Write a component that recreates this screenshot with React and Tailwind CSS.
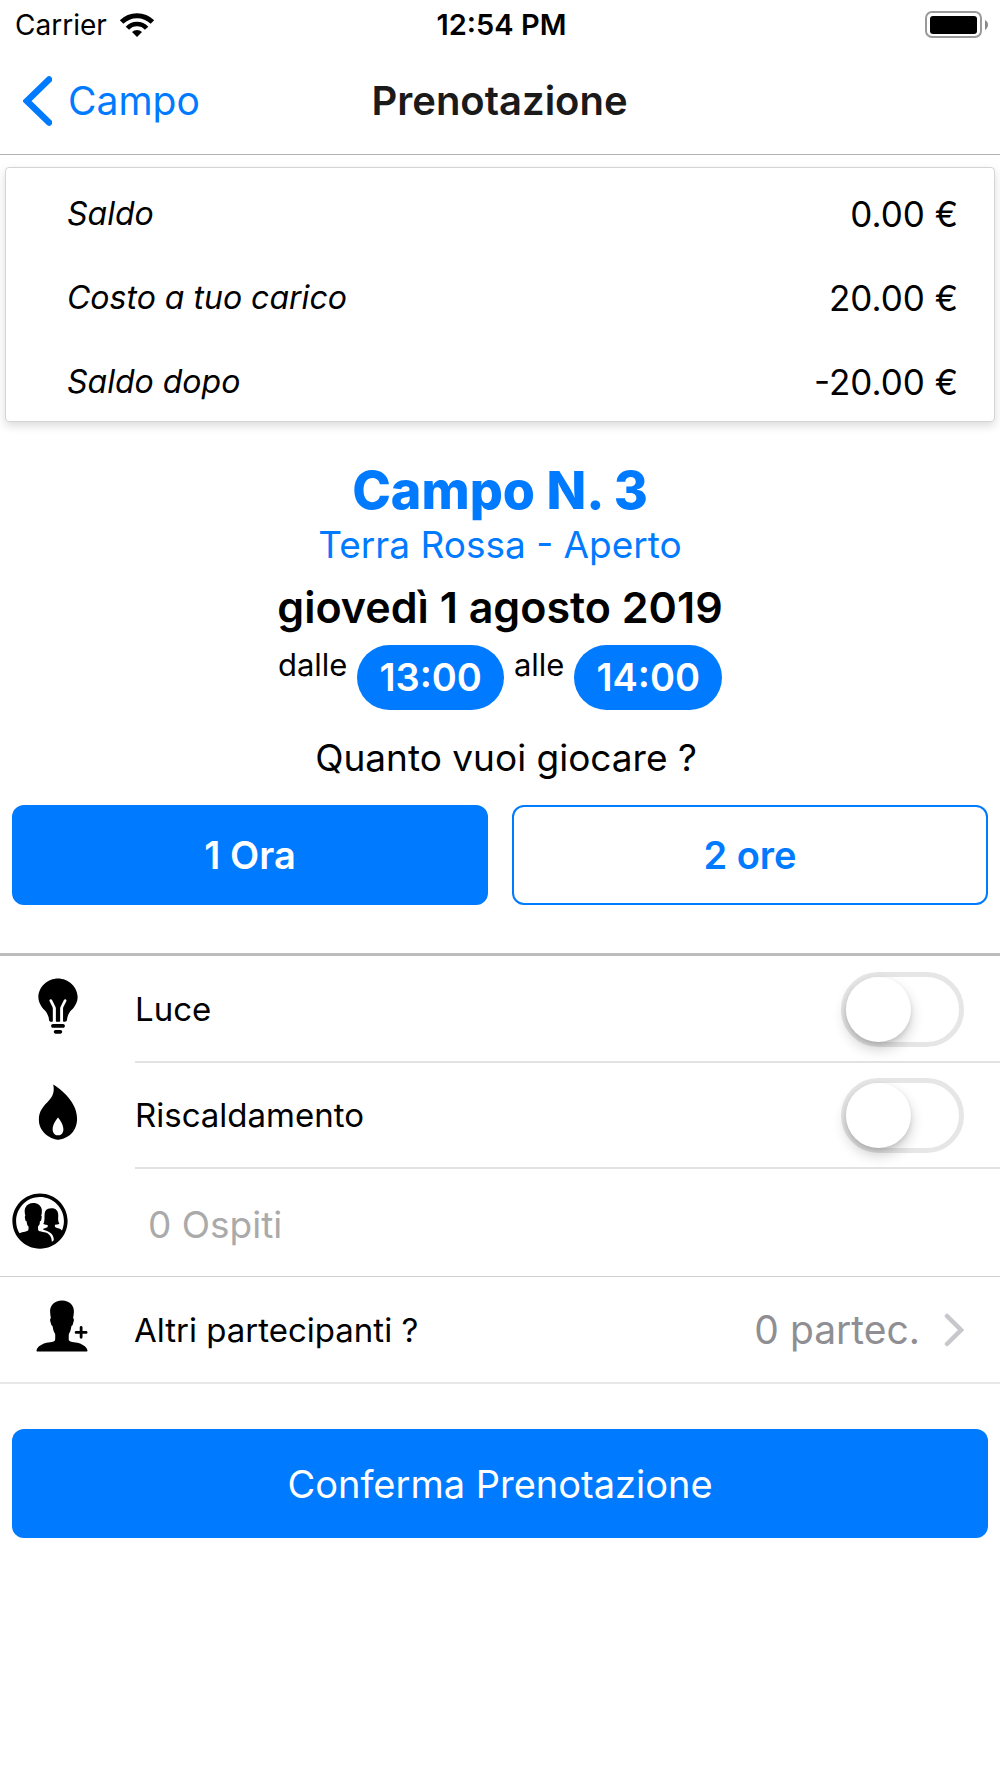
import React, { useState } from 'react';
import { clsx } from 'clsx';
import { IoIosBulb, IoIosContacts, IoIosFlame, IoIosPersonAdd } from 'react-icons/io';

const balance = [
  { label: 'Saldo', value: '0.00 €' },
  { label: 'Costo a tuo carico', value: '20.00 €' },
  { label: 'Saldo dopo', value: '-20.00 €' },
];

const durations = [
  { hours: 1, label: '1 Ora' },
  { hours: 2, label: '2 ore' },
];

function StatusBar() {
  return (
    <div className="grid h-12 grid-cols-3 items-center pl-[15px] pr-3 pt-[2px] text-[28px] leading-8">
      <div className="flex items-center gap-3">
        <span>Carrier</span>
        <svg className="h-6 w-9" viewBox="0 0 36 24" aria-hidden="true">
          <path d="M2.600 9A21.800 21.800 0 0 1 33.400 9" fill="none" stroke="black" strokeWidth="5" />
          <path d="M8.400 15.200A13 13 0 0 1 27.600 15.200" fill="none" stroke="black" strokeWidth="4.600" />
          <path d="M18 24l-5-5a7.400 7.400 0 0 1 10 0z" />
        </svg>
      </div>
      <span className="text-center text-[29px] font-semibold">12:54 PM</span>
      <svg className="h-7 w-[63px] justify-self-end" viewBox="0 0 63 28" aria-hidden="true">
        <rect x="1" y="1" width="55" height="25" rx="6" fill="none" stroke="#9a9a9a" strokeWidth="2" />
        <rect x="5" y="5" width="47" height="18" rx="3" />
        <path d="M60 9c4 2 4 7 0 10z" fill="#8a8a8a" />
      </svg>
    </div>
  );
}

function NavBar() {
  return (
    <header className="grid h-[107px] grid-cols-[1fr_auto_1fr] items-center border-b border-[#b2b2b2] pl-[23px] pr-6">
      <a href="#campo" className="flex items-center gap-4 text-[39px] leading-12 text-[#007aff]">
        <svg className="h-[50px] w-[29px]" viewBox="0 0 29 50" aria-hidden="true">
          <path d="M26 3.500L4 25l22 21.500" fill="none" stroke="currentColor" strokeWidth="6.500" strokeLinecap="round" />
        </svg>
        Campo
      </a>
      <h1 className="text-[40px] font-semibold leading-12 text-[#1a1a1a]">Prenotazione</h1>
    </header>
  );
}

function TimeBadge({ children }) {
  return (
    <span className="rounded-full bg-[#007aff] px-[22px] py-2 text-[38px] font-semibold leading-[49px] text-white">
      {children}
    </span>
  );
}

function ToggleRow({ id, icon: Icon, label, checked, onChange }) {
  return (
    <div className="flex h-[106px] items-stretch pl-6">
      <div className="flex w-[111px] items-center pb-2">
        <Icon size={68} />
      </div>
      <div className="flex flex-1 items-center justify-between border-b-2 border-[#e2e2e2] pr-9">
        <label htmlFor={id} className="text-[33px] leading-10">{label}</label>
        <input
          id={id}
          type="checkbox"
          checked={checked}
          onChange={onChange}
          className="flex h-[75px] w-[123px] appearance-none items-center rounded-full border-[5px] border-[#e6e6e6] bg-white before:size-[65px] before:rounded-full before:bg-white before:shadow-[0_7px_14px_rgba(0,0,0,0.2),0_2px_4px_rgba(0,0,0,0.1)] checked:border-[#4cd964] checked:bg-[#4cd964] checked:before:ml-auto"
        />
      </div>
    </div>
  );
}

function App() {
  const [hours, setHours] = useState(1);
  const [light, setLight] = useState(false);
  const [heating, setHeating] = useState(false);
  const [guests, setGuests] = useState('');

  return (
    <div className="min-h-screen bg-white font-['Inter','Liberation_Sans',sans-serif] text-black">
      <StatusBar />
      <NavBar />

      <main>
        <dl className="mx-[5px] mt-3 rounded-sm border border-[#d4d4d4] pb-px pl-[61px] pr-9 shadow-[0_4px_10px_rgba(0,0,0,0.14)]">
          {balance.map((item) => (
            <div key={item.label} className="flex h-[84px] items-center justify-between pt-2">
              <dt className="text-[32px] italic leading-10">{item.label}</dt>
              <dd className="text-[35px] leading-10">{item.value}</dd>
            </div>
          ))}
        </dl>

        <section className="flex flex-col items-center pt-[39px] text-center">
          <h2 className="text-[52px] font-extrabold leading-[60px] text-[#007aff]">Campo N. 3</h2>
          <p className="text-[37px] leading-12 text-[#007aff]">Terra Rossa - Aperto</p>
          <p className="pt-3 text-[43px] font-semibold leading-[52px]">giovedì 1 agosto 2019</p>
          <div className="flex items-start gap-[10px] pt-3 text-[31px] leading-10">
            <span>dalle</span>
            <TimeBadge>13:00</TimeBadge>
            <span>alle</span>
            <TimeBadge>14:00</TimeBadge>
          </div>
          <p className="pl-3 pt-6 text-[37px] leading-12">Quanto vuoi giocare ?</p>
        </section>

        <div className="grid grid-cols-2 gap-6 px-3 pt-[23px]">
          {durations.map((item) => (
            <button
              key={item.hours}
              type="button"
              onClick={() => setHours(item.hours)}
              className={clsx(
                'h-[100px] rounded-xl border-2 border-[#007aff] text-[38px] font-semibold leading-12',
                hours === item.hours ? 'bg-[#007aff] text-white' : 'bg-white text-[#007aff]'
              )}
            >
              {item.label}
            </button>
          ))}
        </div>

        <div className="mt-12 border-t-[3px] border-[#bcbcbc] pt-px">
          <ToggleRow id="luce" icon={IoIosBulb} label="Luce" checked={light} onChange={() => setLight(!light)} />
          <ToggleRow id="riscaldamento" icon={IoIosFlame} label="Riscaldamento" checked={heating} onChange={() => setHeating(!heating)} />

          <div className="flex h-[108px] items-center border-b border-[#d0d0d0] pl-[6px]">
            <label htmlFor="ospiti" aria-label="Ospiti" className="w-[142px] pb-1">
              <IoIosContacts size={68} />
            </label>
            <input
              id="ospiti"
              type="text"
              inputMode="numeric"
              placeholder="0 Ospiti"
              value={guests}
              onChange={(e) => setGuests(e.target.value)}
              className="min-w-0 flex-1 pt-1 text-[37px] leading-12 outline-none placeholder:text-[#aaaaaa]"
            />
          </div>

          <button type="button" className="flex h-[107px] w-full items-center border-b-2 border-[#e8e8e8] pl-7 pr-9 text-left">
            <span className="w-[106px] pb-2">
              <IoIosPersonAdd size={68} />
            </span>
            <span className="flex-1 text-[33px] leading-10">Altri partecipanti ?</span>
            <span className="text-[39px] leading-12 text-[#8e8e93]">0 partec.</span>
            <svg className="ml-6 h-[34px] w-5" viewBox="0 0 20 34" aria-hidden="true">
              <path d="M3 3l14 14L3 31" fill="none" stroke="#c7c7cc" strokeWidth="4.500" strokeLinecap="round" />
            </svg>
          </button>
        </div>

        <div className="px-3 pt-[45px]">
          <button type="button" className="h-[109px] w-full rounded-xl bg-[#007aff] text-[38px] leading-12 text-white">
            Conferma Prenotazione
          </button>
        </div>
      </main>
    </div>
  );
}

export default App
